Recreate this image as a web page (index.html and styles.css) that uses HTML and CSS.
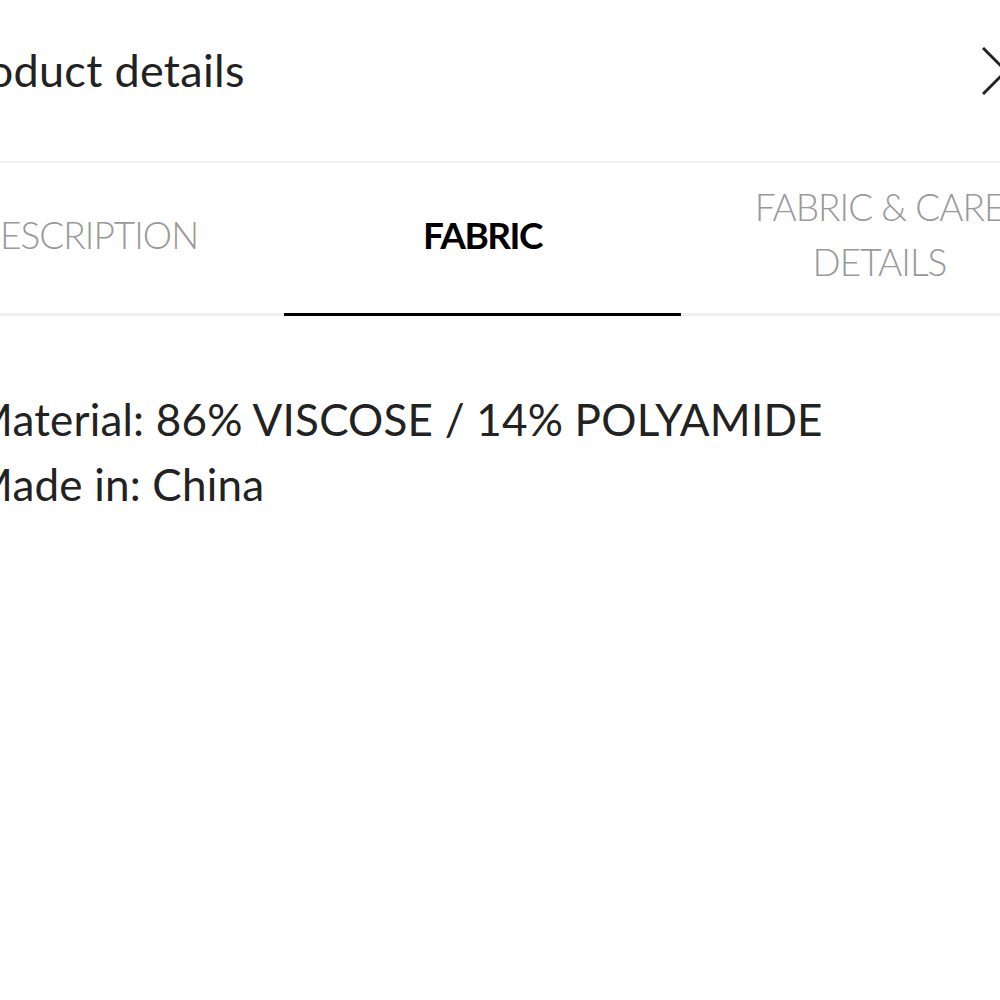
FILE: index.html
```html
<!DOCTYPE html>
<html>
<head>
<meta charset="utf-8">
<link rel="stylesheet" href="styles.css">
</head>
<body>
<div class="sheet">
  <header class="head">
    <h1 class="title">Product details</h1>
    <button class="close" aria-label="Close">
      <svg width="48" height="48" viewBox="0 0 48 48"><path d="M1 1 L47 47 M47 1 L1 47" stroke="#222" stroke-width="3" fill="none"/></svg>
    </button>
  </header>
  <nav class="tabs">
    <div class="tab">DESCRIPTION</div>
    <div class="tab active">FABRIC</div>
    <div class="tab">FABRIC &amp; CARE<br>DETAILS</div>
  </nav>
  <section class="body">
    <p class="line">Material: 86% VISCOSE / 14% POLYAMIDE</p>
    <p class="line">Made in: China</p>
  </section>
</div>
</body>
</html>
```
FILE: styles.css
```css
html, body {
  margin: 0;
  padding: 0;
  background: #fff;
  overflow: hidden;
}
body {
  width: 1000px;
  height: 1000px;
  font-family: Lato, "Liberation Sans", sans-serif;
  color: #222;
}
.sheet {
  width: 1191px;
  margin-left: -113px;
}
.head {
  height: 161px;
  display: flex;
  align-items: center;
  justify-content: space-between;
  padding: 0 48px 0 58px;
  border-bottom: 2px solid #efefef;
}
.title {
  margin: 0;
  font-size: 45px;
  font-weight: 400;
  letter-spacing: 0.3px;
  color: #222;
  padding-bottom: 22px;
}
.close {
  border: 0;
  background: none;
  padding: 0;
  margin-bottom: 20px;
  display: flex;
}
.tabs {
  display: grid;
  grid-template-columns: repeat(3, 1fr);
  height: 150px;
  border-bottom: 3px solid #f0f0f0;
}
.tab {
  display: flex;
  align-items: center;
  justify-content: center;
  text-align: center;
  font-size: 37px;
  letter-spacing: -1px;
  line-height: 55px;
  font-weight: 300;
  color: #999;
  margin-bottom: -3px;
  padding-bottom: 8px;
  border-bottom: 3px solid transparent;
}
.tab.active {
  color: #000;
  font-weight: 700;
  letter-spacing: -1.5px;
  border-bottom-color: #000;
}
.body {
  padding: 71px 0 0 85px;
}
.line {
  margin: 0;
  font-size: 44px;
  line-height: 65px;
  letter-spacing: 0.2px;
  color: #222;
}
```
